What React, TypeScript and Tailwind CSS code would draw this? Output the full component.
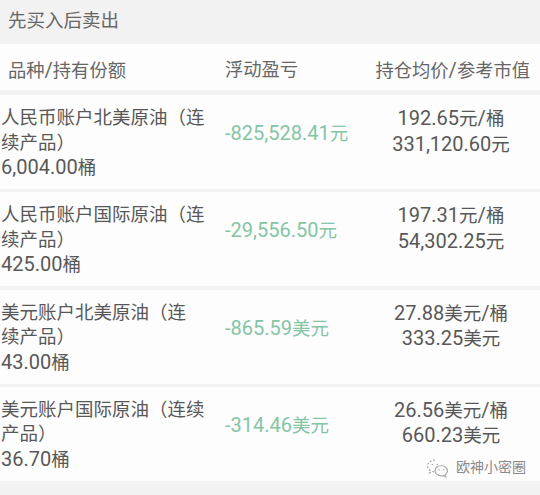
import React from "react";

type Part = { n: string; u?: string };
type Row = { name: string[]; qty: Part; pnl: Part; price: Part; value: Part };

const rows: Row[] = [
  { name: ["人民币账户北美原油（连", "续产品）"], qty: { n: "6,004.00", u: "桶" }, pnl: { n: "-825,528.41", u: "元" }, price: { n: "192.65", u: "元/桶" }, value: { n: "331,120.60", u: "元" } },
  { name: ["人民币账户国际原油（连", "续产品）"], qty: { n: "425.00", u: "桶" }, pnl: { n: "-29,556.50", u: "元" }, price: { n: "197.31", u: "元/桶" }, value: { n: "54,302.25", u: "元" } },
  { name: ["美元账户北美原油（连", "续产品）"], qty: { n: "43.00", u: "桶" }, pnl: { n: "-865.59", u: "美元" }, price: { n: "27.88", u: "美元/桶" }, value: { n: "333.25", u: "美元" } },
  { name: ["美元账户国际原油（连续", "产品）"], qty: { n: "36.70", u: "桶" }, pnl: { n: "-314.46", u: "美元" }, price: { n: "26.56", u: "美元/桶" }, value: { n: "660.23", u: "美元" } },
];

function Num({ p }: { p: Part }) {
  const u = p.u ?? "";
  const slash = u.indexOf("/");
  return (
    <span className="whitespace-nowrap">
      <span className="text-[20px]">{p.n}</span>
      {slash >= 0 ? (
        <>
          {u.slice(0, slash)}
          <span className="text-[20px]">/</span>
          {u.slice(slash + 1)}
        </>
      ) : (
        u
      )}
    </span>
  );
}

function WeChatIcon() {
  return (
    <svg width="24" height="20" viewBox="0 0 24 20" fill="none" stroke="#a8a8a8" strokeWidth="1.2">
      <path d="M9 2C4.8 2 1.5 4.7 1.5 8c0 1.9 1.1 3.5 2.7 4.6L3.6 15l2.8-1.5c.8.2 1.7.4 2.6.4" strokeDasharray="2 1.6" />
      <path d="M15.5 7.5c-3.6 0-6.5 2.3-6.5 5.2s2.9 5.2 6.5 5.2c.7 0 1.4-.1 2-.3l2.3 1.2-.5-2c1.4-.9 2.2-2.4 2.2-4.1 0-2.9-2.9-5.2-6.5-5.2z" />
      <circle cx="6.3" cy="6.5" r="0.8" fill="#a8a8a8" stroke="none" />
      <circle cx="11.3" cy="6.5" r="0.8" fill="#a8a8a8" stroke="none" />
      <circle cx="13.3" cy="11.8" r="0.7" fill="#a8a8a8" stroke="none" />
      <circle cx="17.7" cy="11.8" r="0.7" fill="#a8a8a8" stroke="none" />
    </svg>
  );
}

export default function App() {
  return (
    <div
      className="relative w-[540px] h-[495px] overflow-hidden bg-[#f2f2f2] flex flex-col"
      style={{ fontFamily: '"Roboto", "Noto Sans CJK SC", sans-serif' }}
    >
      <div className="h-[44px] shrink-0 flex items-center pl-[8px] text-[18.5px] text-[#666666]">先买入后卖出</div>
      <div className="h-[46px] shrink-0 bg-[#fdfdfd] flex items-center pt-[5px] text-[18.3px] text-[#666666]">
        <div className="w-[225px] pl-[8px] whitespace-nowrap">
          品种<span className="text-[20px]">/</span>持有份额
        </div>
        <div className="w-[137px]">浮动盈亏</div>
        <div className="flex-1 text-right pr-[10px] whitespace-nowrap">
          持仓均价<span className="text-[20px]">/</span>参考市值
        </div>
      </div>
      <div className="mt-[5px] flex flex-col gap-[3.33px]">
        {rows.map((r, i) => (
          <div key={i} className="h-[94px] bg-[#fdfdfd] flex text-[18.5px] leading-[24.5px] text-[#585858]">
            <div className="w-[225px] pt-[11px] pl-[1px]">
              {r.name.map((l, j) => (
                <div key={j} className="whitespace-nowrap">{l}</div>
              ))}
              <div>
                <Num p={r.qty} />
              </div>
            </div>
            <div className="w-[137px] pt-[26px] text-[#84c5a5]">
              <Num p={r.pnl} />
            </div>
            <div className="flex-1 pt-[11px] text-center">
              <div>
                <Num p={r.price} />
              </div>
              <div>
                <Num p={r.value} />
              </div>
            </div>
          </div>
        ))}
      </div>
      <div className="absolute left-[426px] top-[457px] flex items-center gap-[6px]">
        <WeChatIcon />
        <span className="text-[14px] text-[#8a8a8a]">欧神小密圈</span>
      </div>
    </div>
  );
}
